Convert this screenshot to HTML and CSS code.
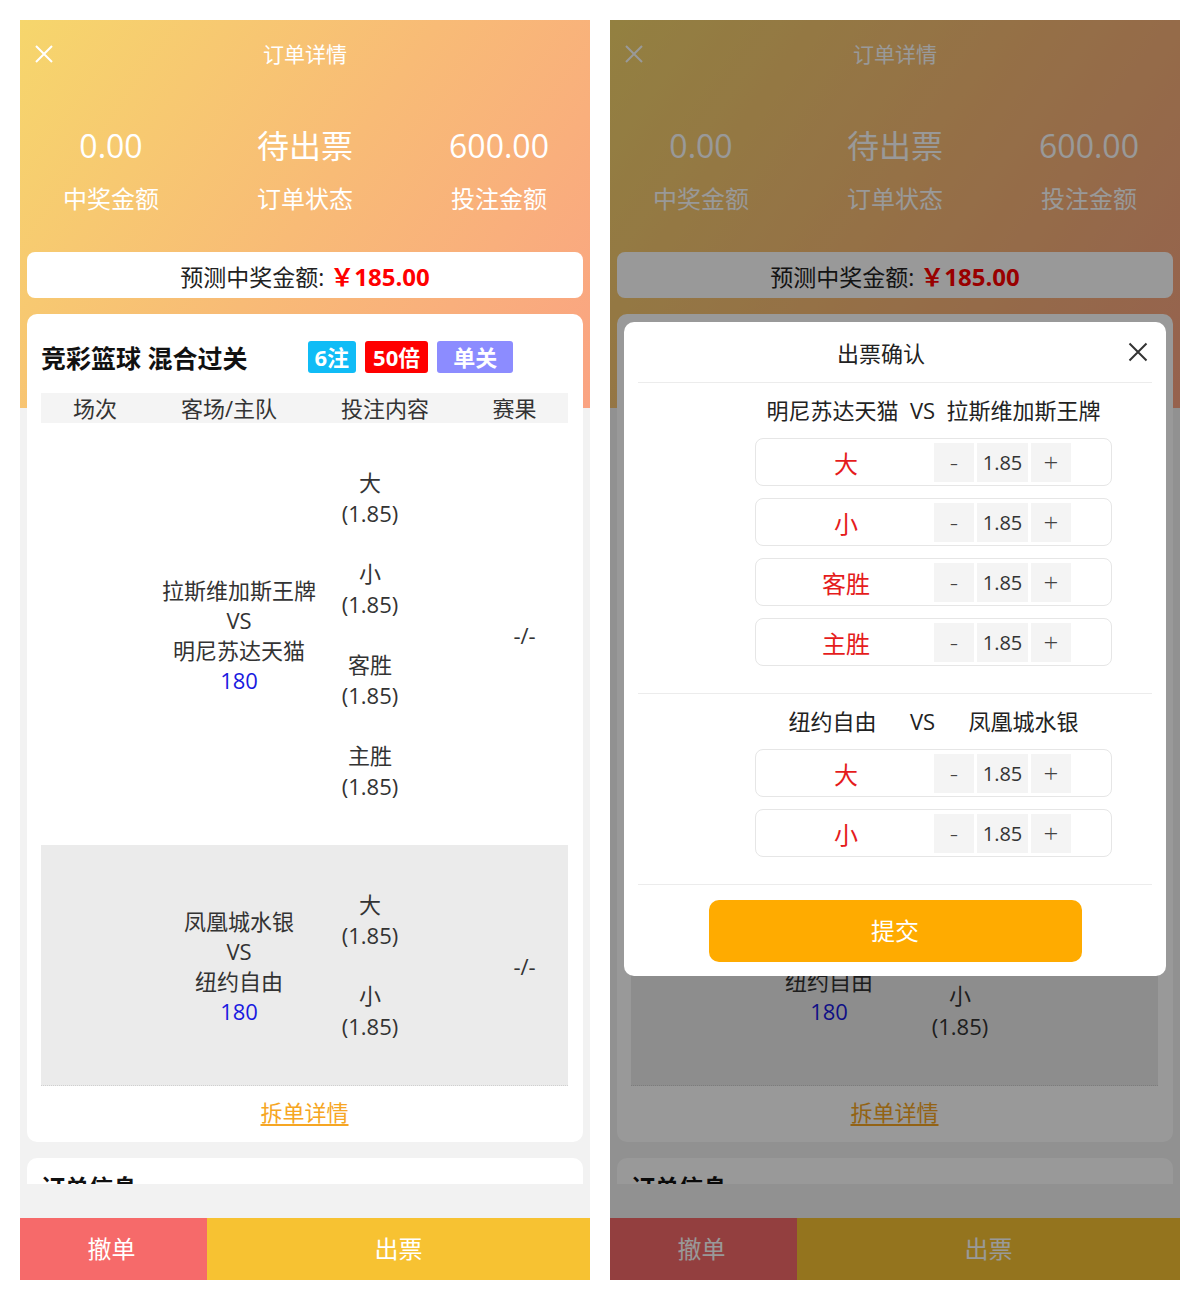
FILE: index.html
```html
<!DOCTYPE html>
<html lang="zh-CN">
<head>
  <meta charset="UTF-8">
  <meta name="viewport" content="width=device-width, initial-scale=1.0">
  <title>订单详情</title>
  <link rel="stylesheet" href="styles.css">
</head>
<body>

  <div class="screens">

    <!-- order detail -->
    <div class="phone">
      <div class="scroll">
        <div class="nav">
          <span class="nav-close">
            <svg width="20" height="20" viewBox="0 0 20 20"><path d="M2 2L18 18M18 2L2 18" stroke="#fff" stroke-width="2" fill="none"/></svg>
          </span>
          <span class="nav-title">订单详情</span>
          <span></span>
        </div>

        <div class="stats">
          <div>
            <div class="stat-value">0.00</div>
            <div class="stat-label">中奖金额</div>
          </div>
          <div>
            <div class="stat-value">待出票</div>
            <div class="stat-label">订单状态</div>
          </div>
          <div>
            <div class="stat-value">600.00</div>
            <div class="stat-label">投注金额</div>
          </div>
        </div>

        <div class="forecast">预测中奖金额: <span class="forecast-money">￥185.00</span></div>

        <div class="card">
          <div class="card-head">
            <span class="card-title">竞彩篮球 混合过关</span>
            <div class="tags">
              <span class="tag tag-count">6注</span>
              <span class="tag tag-multi">50倍</span>
              <span class="tag tag-pass">单关</span>
            </div>
          </div>

          <div class="table-head">
            <span>场次</span>
            <span>客场/主队</span>
            <span>投注内容</span>
            <span>赛果</span>
          </div>

          <div class="table-row">
            <span></span>
            <div class="teams">
              <div>拉斯维加斯王牌</div>
              <div>VS</div>
              <div>明尼苏达天猫</div>
              <div class="score">180</div>
            </div>
            <div class="odds">
              <div class="odd"><div>大</div><div>(1.85)</div></div>
              <div class="odd"><div>小</div><div>(1.85)</div></div>
              <div class="odd"><div>客胜</div><div>(1.85)</div></div>
              <div class="odd"><div>主胜</div><div>(1.85)</div></div>
            </div>
            <div class="result">-/-</div>
          </div>

          <div class="table-row table-row-alt">
            <span></span>
            <div class="teams">
              <div>凤凰城水银</div>
              <div>VS</div>
              <div>纽约自由</div>
              <div class="score">180</div>
            </div>
            <div class="odds">
              <div class="odd"><div>大</div><div>(1.85)</div></div>
              <div class="odd"><div>小</div><div>(1.85)</div></div>
            </div>
            <div class="result">-/-</div>
          </div>

          <a class="split-link" href="#">拆单详情</a>
        </div>

        <div class="card card-info">
          <div class="card-title">订单信息</div>
        </div>
      </div>

      <div class="footer">
        <div class="footer-btn btn-cancel">撤单</div>
        <div class="footer-btn btn-issue">出票</div>
      </div>
    </div>

    <!-- same page with the confirm dialog open -->
    <div class="phone">
      <div class="scroll">
        <div class="nav">
          <span class="nav-close">
            <svg width="20" height="20" viewBox="0 0 20 20"><path d="M2 2L18 18M18 2L2 18" stroke="#fff" stroke-width="2" fill="none"/></svg>
          </span>
          <span class="nav-title">订单详情</span>
          <span></span>
        </div>

        <div class="stats">
          <div>
            <div class="stat-value">0.00</div>
            <div class="stat-label">中奖金额</div>
          </div>
          <div>
            <div class="stat-value">待出票</div>
            <div class="stat-label">订单状态</div>
          </div>
          <div>
            <div class="stat-value">600.00</div>
            <div class="stat-label">投注金额</div>
          </div>
        </div>

        <div class="forecast">预测中奖金额: <span class="forecast-money">￥185.00</span></div>

        <div class="card">
          <div class="card-head">
            <span class="card-title">竞彩篮球 混合过关</span>
            <div class="tags">
              <span class="tag tag-count">6注</span>
              <span class="tag tag-multi">50倍</span>
              <span class="tag tag-pass">单关</span>
            </div>
          </div>

          <div class="table-head">
            <span>场次</span>
            <span>客场/主队</span>
            <span>投注内容</span>
            <span>赛果</span>
          </div>

          <div class="table-row">
            <span></span>
            <div class="teams">
              <div>拉斯维加斯王牌</div>
              <div>VS</div>
              <div>明尼苏达天猫</div>
              <div class="score">180</div>
            </div>
            <div class="odds">
              <div class="odd"><div>大</div><div>(1.85)</div></div>
              <div class="odd"><div>小</div><div>(1.85)</div></div>
              <div class="odd"><div>客胜</div><div>(1.85)</div></div>
              <div class="odd"><div>主胜</div><div>(1.85)</div></div>
            </div>
            <div class="result">-/-</div>
          </div>

          <div class="table-row table-row-alt">
            <span></span>
            <div class="teams">
              <div>凤凰城水银</div>
              <div>VS</div>
              <div>纽约自由</div>
              <div class="score">180</div>
            </div>
            <div class="odds">
              <div class="odd"><div>大</div><div>(1.85)</div></div>
              <div class="odd"><div>小</div><div>(1.85)</div></div>
            </div>
            <div class="result">-/-</div>
          </div>

          <a class="split-link" href="#">拆单详情</a>
        </div>

        <div class="card card-info">
          <div class="card-title">订单信息</div>
        </div>
      </div>

      <div class="footer">
        <div class="footer-btn btn-cancel">撤单</div>
        <div class="footer-btn btn-issue">出票</div>
      </div>

      <div class="mask"></div>

      <div class="dialog">
        <div class="dialog-head">
          <span class="dialog-title">出票确认</span>
          <span class="dialog-close">
            <svg width="20" height="20" viewBox="0 0 20 20"><path d="M1.5 1.5L18.5 18.5M18.5 1.5L1.5 18.5" stroke="#333" stroke-width="2" fill="none"/></svg>
          </span>
        </div>

        <div class="match">
          <div class="match-teams">
            <span>明尼苏达天猫</span>
            <span>VS</span>
            <span>拉斯维加斯王牌</span>
          </div>
          <div class="pick">
            <span class="pick-name">大</span>
            <div class="stepper"><span class="step-btn">-</span><span class="step-val">1.85</span><span class="step-btn">+</span></div>
          </div>
          <div class="pick">
            <span class="pick-name">小</span>
            <div class="stepper"><span class="step-btn">-</span><span class="step-val">1.85</span><span class="step-btn">+</span></div>
          </div>
          <div class="pick">
            <span class="pick-name">客胜</span>
            <div class="stepper"><span class="step-btn">-</span><span class="step-val">1.85</span><span class="step-btn">+</span></div>
          </div>
          <div class="pick">
            <span class="pick-name">主胜</span>
            <div class="stepper"><span class="step-btn">-</span><span class="step-val">1.85</span><span class="step-btn">+</span></div>
          </div>
        </div>

        <div class="match">
          <div class="match-teams">
            <span>纽约自由</span>
            <span>VS</span>
            <span>凤凰城水银</span>
          </div>
          <div class="pick">
            <span class="pick-name">大</span>
            <div class="stepper"><span class="step-btn">-</span><span class="step-val">1.85</span><span class="step-btn">+</span></div>
          </div>
          <div class="pick">
            <span class="pick-name">小</span>
            <div class="stepper"><span class="step-btn">-</span><span class="step-val">1.85</span><span class="step-btn">+</span></div>
          </div>
        </div>

        <div class="submit">提交</div>
      </div>
    </div>

  </div>

</body>
</html>
```

FILE: styles.css
```css
* {
  box-sizing: border-box;
}

body {
  margin: 0;
  background-color: #fff;
  font-family: "Open Sans", "Noto Sans CJK SC", sans-serif;
  color: #333;
}

.screens {
  display: flex;
  gap: 20px;
  padding: 20px;
}

.phone {
  position: relative;
  width: 570px;
  height: 1260px;
  background-color: #f2f2f2;
  overflow: hidden;
}

.scroll {
  height: 1164px;
  overflow: hidden;
  background: linear-gradient(125deg, #f6d66c 0%, #f8bb76 50%, #faa382 100%) top / 100% 388px no-repeat;
}

/* top bar */
.nav {
  display: grid;
  grid-template-columns: 1fr auto 1fr;
  align-items: center;
  height: 66px;
  padding: 0 14px;
  color: #fff;
}

.nav-close {
  display: flex;
  margin-top: 2px;
}

.nav-title {
  font-size: 21px;
}

.stats {
  display: grid;
  grid-template-columns: repeat(3, 1fr);
  margin: 35px -6px 0;
  color: #fff;
  text-align: center;
}

.stat-value {
  font-size: 32px;
  line-height: 50px;
}

.stat-label {
  font-size: 24px;
  line-height: 56px;
}

.forecast {
  margin: 25px 7px 0;
  height: 46px;
  padding-top: 3px;
  background-color: #fff;
  border-radius: 8px;
  text-align: center;
  font-size: 23px;
  line-height: 43px;
  color: #222;
}

.forecast-money {
  color: #f00;
  font-weight: bold;
  font-size: 24px;
}

/* cards */
.card {
  margin: 16px 7px 0;
  background-color: #fff;
  border-radius: 10px;
  padding: 27px 15px 0 14px;
}

.card-head {
  display: flex;
  align-items: center;
  height: 32px;
}

.card-title {
  font-size: 25px;
  font-weight: bold;
  color: #111;
}

.tags {
  display: flex;
  gap: 9px;
  margin-left: 60px;
}

.tag {
  height: 32px;
  line-height: 32px;
  padding: 0 7px;
  border-radius: 3px;
  color: #fff;
  font-size: 22px;
  font-weight: bold;
}

.tag-count {
  background-color: #10bcf6;
}

.tag-multi {
  background-color: #ff0000;
  padding: 0 8px;
}

.tag-pass {
  background-color: #8c8cff;
  padding: 0 16px;
}

.table-head {
  display: grid;
  grid-template-columns: 108px 160px 152px 1fr;
  margin-top: 20px;
  height: 30px;
  line-height: 30px;
  background-color: #f4f4f4;
  font-size: 22px;
  text-align: center;
}

.table-row {
  display: grid;
  grid-template-columns: 118px 160px 102px 1fr;
  align-items: center;
  padding: 44px 0 43px;
  font-size: 22px;
  text-align: center;
}

.table-row-alt {
  background-color: #ebebeb;
  border-bottom: 1px dotted #cfcfcf;
}

.teams {
  line-height: 30px;
}

.score {
  color: #1a1ae0;
}

.odd {
  line-height: 31px;
}

.odd + .odd {
  margin-top: 29px;
}

.result {
  padding-left: 60px;
}

.split-link {
  display: block;
  height: 56px;
  line-height: 52px;
  text-align: center;
  font-size: 22px;
  color: #f6a623;
  text-decoration: underline;
  text-underline-offset: 3px;
}

.card-info {
  padding-top: 14px;
  height: 120px;
}

.card-info .card-title {
  font-size: 24px;
  line-height: 32px;
}

/* bottom actions */
.footer {
  display: flex;
  margin-top: 34px;
  height: 62px;
}

.footer-btn {
  color: #fff;
  font-size: 24px;
  line-height: 62px;
  text-align: center;
}

.btn-cancel {
  width: 187px;
  padding-right: 4px;
  background-color: #f66a6a;
}

.btn-issue {
  flex: 1;
  background-color: #f7c232;
}

/* confirm dialog */
.mask {
  position: absolute;
  inset: 0;
  background-color: rgba(0, 0, 0, 0.4);
}

.dialog {
  position: absolute;
  left: 14px;
  top: 302px;
  width: 542px;
  padding: 0 14px 14px;
  background-color: #fff;
  border-radius: 10px;
}

.dialog-head {
  display: flex;
  align-items: center;
  height: 61px;
  border-bottom: 1px solid #ececec;
}

.dialog-title {
  flex: 1;
  text-align: center;
  font-size: 22px;
  color: #222;
}

.dialog-close {
  display: flex;
  justify-content: center;
  width: 28px;
}

.match {
  padding: 12px 0 27px;
  border-bottom: 1px solid #ececec;
}

.match-teams {
  display: flex;
  justify-content: space-evenly;
  width: 357px;
  margin-left: 117px;
  line-height: 31px;
  font-size: 22px;
  color: #222;
}

.pick {
  display: flex;
  align-items: center;
  width: 357px;
  height: 48px;
  margin: 12px 0 0 117px;
  border: 1px solid #e6e6e6;
  border-radius: 8px;
}

.pick-name {
  width: 180px;
  text-align: center;
  font-size: 24px;
  color: #e51c1c;
}

.stepper {
  display: flex;
  gap: 3px;
  margin-left: -2px;
}

.step-btn,
.step-val {
  height: 39px;
  line-height: 39px;
  text-align: center;
  background-color: #f4f4f4;
}

.step-btn {
  width: 40px;
  font-size: 26px;
  font-weight: 300;
  color: #444;
}

.step-val {
  width: 51px;
  font-size: 20px;
  color: #333;
}

.submit {
  width: 373px;
  height: 62px;
  margin: 15px auto 0;
  background-color: #ffab00;
  border-radius: 10px;
  color: #fff;
  font-size: 24px;
  line-height: 62px;
  text-align: center;
}
```
